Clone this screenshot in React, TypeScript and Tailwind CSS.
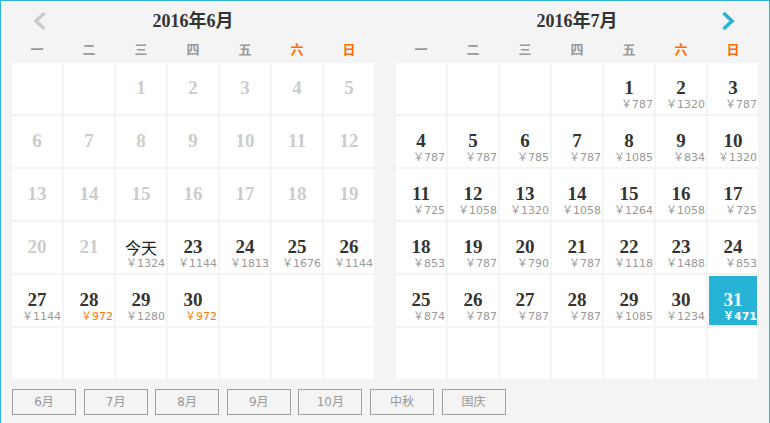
type Day = {
  day?: number
  label?: string
  price?: number
  past?: boolean
  cheap?: boolean
  selected?: boolean
}

const WEEK = ["一", "二", "三", "四", "五", "六", "日"]

const junePrices: Record<number, number> = {
  22: 1324, 23: 1144, 24: 1813, 25: 1676, 26: 1144, 27: 1144, 28: 972, 29: 1280, 30: 972
}

const julyPrices: Record<number, number> = {
  1: 787, 2: 1320, 3: 787, 4: 787, 5: 787, 6: 785, 7: 787, 8: 1085, 9: 834, 10: 1320,
  11: 725, 12: 1058, 13: 1320, 14: 1058, 15: 1264, 16: 1058, 17: 725, 18: 853, 19: 787,
  20: 790, 21: 787, 22: 1118, 23: 1488, 24: 853, 25: 874, 26: 787, 27: 787, 28: 787,
  29: 1085, 30: 1234, 31: 471
}

function buildMonth(offset: number, total: number, prices: Record<number, number>, today?: number): Day[] {
  const cells: Day[] = []
  for (let i = 0; i < offset; i++) cells.push({})
  for (let d = 1; d <= total; d++) {
    cells.push({
      day: d,
      label: d === today ? "今天" : undefined,
      price: prices[d],
      past: today !== undefined && d < today,
      cheap: prices[d] === 972,
      selected: prices[d] === 471
    })
  }
  while (cells.length < 42) cells.push({})
  return cells
}

const june = buildMonth(2, 30, junePrices, 22)
const july = buildMonth(4, 31, julyPrices)

const NUM_FONT = "font-['Liberation_Serif',serif]"
const PRICE_FONT = "font-['DejaVu_Sans','Noto_Sans_CJK_SC',sans-serif]"

function Cell({ cell }: { cell: Day }) {
  if (!cell.day) return <div className="h-[51px] bg-white" />
  if (cell.selected) {
    return (
      <div className="h-[51px] bg-white p-[1px]">
        <div className="flex h-full flex-col bg-[#27b3d6] pt-[14px]">
          <div className={`${NUM_FONT} text-center text-[19px] font-bold leading-[20px] text-white`}>{cell.day}</div>
          <div className={`${PRICE_FONT} text-right text-[11px] font-bold leading-[14px] text-white`}>￥{cell.price}</div>
        </div>
      </div>
    )
  }
  return (
    <div className="flex h-[51px] flex-col bg-white pt-[15px]">
      {cell.label ? (
        <div className="text-center font-['Noto_Sans_CJK_SC',sans-serif] text-[16px] leading-[20px] text-[#222]">{cell.label}</div>
      ) : (
        <div className={`${NUM_FONT} text-center text-[19px] font-bold leading-[20px] ${cell.past ? "text-[#cccccc]" : "text-[#333]"}`}>
          {cell.day}
        </div>
      )}
      {cell.price !== undefined && (
        <div className={`${PRICE_FONT} pr-[1px] text-right text-[11px] leading-[14px] ${cell.cheap ? "text-[#ff7a00]" : "text-[#999]"}`}>
          ￥{cell.price}
        </div>
      )}
    </div>
  )
}

function Chevron({ dir, color }: { dir: "left" | "right"; color: string }) {
  const points = dir === "left" ? "11.5,2 3,10 11.5,18" : "2.5,2 11,10 2.5,18"
  return (
    <svg width="14" height="20" viewBox="0 0 14 20">
      <polyline points={points} fill="none" stroke={color} strokeWidth="3.6" />
    </svg>
  )
}

function Month({ title, cells, arrow }: { title: string; cells: Day[]; arrow: "left" | "right" }) {
  return (
    <div className="w-[362px]">
      <div className="relative flex h-[40px] items-center justify-center">
        <span className="font-['Liberation_Serif','Noto_Sans_CJK_SC',serif] text-[18px] font-bold text-[#333]">{title}</span>
        {arrow === "left" ? (
          <div className="absolute left-[21px] top-[10px]">
            <Chevron dir="left" color="#cccccc" />
          </div>
        ) : (
          <div className="absolute right-[23px] top-[10px]">
            <Chevron dir="right" color="#27b3d6" />
          </div>
        )}
      </div>
      <div className="grid h-[16px] grid-cols-7 gap-[2px]">
        {WEEK.map((w, i) => (
          <div
            key={w}
            className={`text-center font-['Noto_Sans_CJK_SC',sans-serif] text-[13px] font-bold leading-[16px] ${i >= 5 ? "text-[#ff6a00]" : "text-[#999]"}`}
          >
            {w}
          </div>
        ))}
      </div>
      <div className="mt-[6px] grid grid-cols-7 gap-[2px]">
        {cells.map((c, i) => (
          <Cell key={i} cell={c} />
        ))}
      </div>
    </div>
  )
}

const BUTTONS = ["6月", "7月", "8月", "9月", "10月", "中秋", "国庆"]

export default function App() {
  return (
    <div className="w-[770px] border border-[#2ab3d6] bg-[#f4f4f4] px-[11px] pb-[20px]">
      <div className="flex gap-[22px]">
        <Month title="2016年6月" cells={june} arrow="left" />
        <Month title="2016年7月" cells={july} arrow="right" />
      </div>
      <div className="mt-[10px] flex gap-[7.6px]">
        {BUTTONS.map((b) => (
          <div
            key={b}
            className="flex h-[26px] w-[64px] items-center justify-center border border-[#a0a0a0] font-['DejaVu_Sans','Noto_Sans_CJK_SC',sans-serif] text-[12px] text-[#999]"
          >
            {b}
          </div>
        ))}
      </div>
    </div>
  )
}
